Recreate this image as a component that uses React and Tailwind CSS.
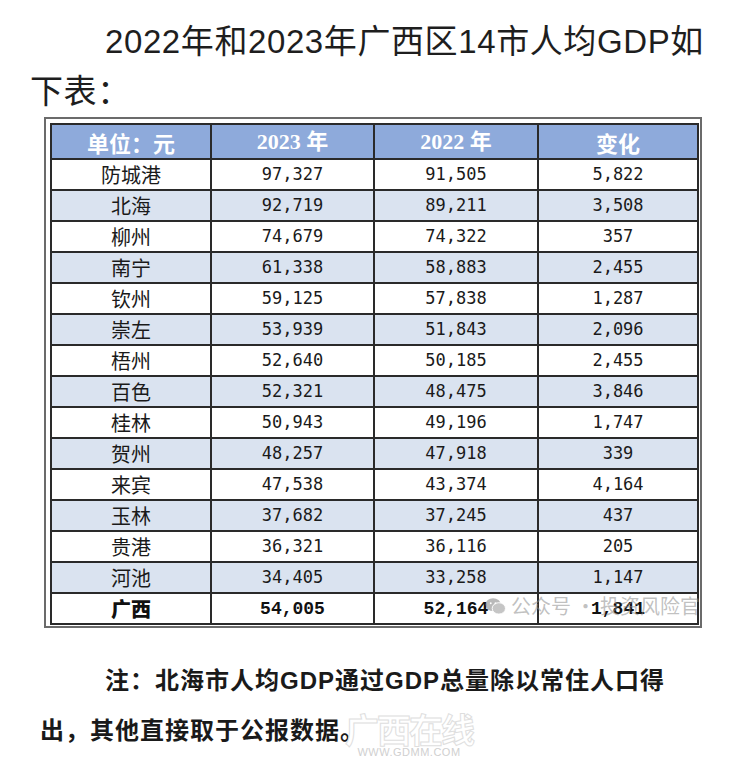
import React from "react";

const rows = [
  ["防城港", "97,327", "91,505", "5,822"],
  ["北海", "92,719", "89,211", "3,508"],
  ["柳州", "74,679", "74,322", "357"],
  ["南宁", "61,338", "58,883", "2,455"],
  ["钦州", "59,125", "57,838", "1,287"],
  ["崇左", "53,939", "51,843", "2,096"],
  ["梧州", "52,640", "50,185", "2,455"],
  ["百色", "52,321", "48,475", "3,846"],
  ["桂林", "50,943", "49,196", "1,747"],
  ["贺州", "48,257", "47,918", "339"],
  ["来宾", "47,538", "43,374", "4,164"],
  ["玉林", "37,682", "37,245", "437"],
  ["贵港", "36,321", "36,116", "205"],
  ["河池", "34,405", "33,258", "1,147"],
];

const cjk = "font-['Noto_Sans_CJK_SC',sans-serif]";
const num = "font-['DejaVu_Sans_Mono','Noto_Sans_CJK_SC',monospace]";

export default function App() {
  return (
    <div className="w-[750px] h-[757px] bg-white overflow-hidden relative text-[#222]">
      <p className="pl-[30px] pt-[17px] text-[33px] leading-[50px] indent-[75px] font-['Liberation_Sans','Noto_Sans_CJK_SC',sans-serif] text-[#1e1e1e] tracking-[0.6px] whitespace-nowrap">
        2022年和2023年广西区14市人均GDP如
        <br />
        下表：
      </p>

      <div className="ml-[44px] w-[658px] h-[511px] border-2 border-[#6b6b6b] pl-[4px] pt-[4px] relative">
        <table className="table-fixed border-collapse w-[647px]">
          <colgroup>
            <col className="w-[160px]" />
            <col className="w-[163px]" />
            <col className="w-[164px]" />
            <col className="w-[160px]" />
          </colgroup>
          <thead>
            <tr className="h-[35px] bg-[#8eaadb] text-white">
              <th className={`border-2 border-[#2a2a2a] p-0 text-[22px] font-bold ${cjk} leading-none`}>单位：元</th>
              <th className="border-2 border-[#2a2a2a] p-0 text-[22px] font-bold font-['Liberation_Serif','Noto_Sans_CJK_SC',serif] leading-none">2023 年</th>
              <th className="border-2 border-[#2a2a2a] p-0 text-[22px] font-bold font-['Liberation_Serif','Noto_Sans_CJK_SC',serif] leading-none">2022 年</th>
              <th className={`border-2 border-[#2a2a2a] p-0 text-[22px] font-bold ${cjk} leading-none`}>变化</th>
            </tr>
          </thead>
          <tbody>
            {rows.map((r, i) => (
              <tr key={r[0]} className={`h-[31px] ${i % 2 === 1 ? "bg-[#dae3f0]" : "bg-white"}`}>
                <td className={`border-2 border-[#2a2a2a] p-0 text-center text-[20px] leading-none ${cjk} text-[#1a1a1a]`}>{r[0]}</td>
                <td className={`border-2 border-[#2a2a2a] p-0 text-center text-[17px] leading-none ${num} text-[#1a1a1a]`}>{r[1]}</td>
                <td className={`border-2 border-[#2a2a2a] p-0 text-center text-[17px] leading-none ${num} text-[#1a1a1a]`}>{r[2]}</td>
                <td className={`border-2 border-[#2a2a2a] p-0 text-center text-[17px] leading-none ${num} text-[#1a1a1a]`}>{r[3]}</td>
              </tr>
            ))}
            <tr className="h-[31px] bg-white">
              <td className={`border-2 border-[#2a2a2a] p-0 text-center text-[20px] font-black leading-none ${cjk} text-[#111]`}>广西</td>
              <td className="border-2 border-[#2a2a2a] p-0 text-center text-[18px] font-bold leading-none font-['Liberation_Mono',monospace] text-[#111]">54,005</td>
              <td className="border-2 border-[#2a2a2a] p-0 text-center text-[18px] font-bold leading-none font-['Liberation_Mono',monospace] text-[#111]">52,164</td>
              <td className="border-2 border-[#2a2a2a] p-0 text-center text-[18px] font-bold leading-none font-['Liberation_Mono',monospace] text-[#111]">1,841</td>
            </tr>
          </tbody>
        </table>

        <div className={`absolute left-[439px] top-[477px] flex items-center gap-[5px] whitespace-nowrap text-[20px] ${cjk} text-[rgba(140,140,140,0.55)] leading-none`}>
          <svg width="21" height="19" viewBox="0 0 22 20" className="opacity-60 shrink-0">
            <ellipse cx="8.5" cy="8" rx="8" ry="6.8" fill="#8c8c8c" />
            <ellipse cx="14.5" cy="12" rx="7" ry="6" fill="#a0a0a0" stroke="#fff" strokeWidth="1" />
            <circle cx="6" cy="6.5" r="1" fill="#fff" />
            <circle cx="11" cy="6.5" r="1" fill="#fff" />
          </svg>
          <span>公众号 · 投资风险官</span>
        </div>
      </div>

      <p className="mt-[28px] pl-[40px] indent-[65px] text-[24px] leading-[50px] font-bold tracking-[1px] font-['Liberation_Sans','Noto_Sans_CJK_SC',sans-serif] text-[#1a1a1a] whitespace-nowrap">
        注：北海市人均GDP通过GDP总量除以常住人口得
        <br />
        出，其他直接取于公报数据。
      </p>

      <div className="absolute left-[345px] top-[712px] flex flex-col items-center leading-none pointer-events-none">
        <span className={`text-[34px] ${cjk} font-bold text-[rgba(255,255,255,0.6)] [-webkit-text-stroke:1px_#dedede] tracking-[-2px]`}>广西在线</span>
        <span className="mt-[1px] text-[11px] font-['Liberation_Sans',sans-serif] text-[#d0d0d0] tracking-[0.5px]">WWW.GDMM.COM</span>
      </div>
    </div>
  );
}
